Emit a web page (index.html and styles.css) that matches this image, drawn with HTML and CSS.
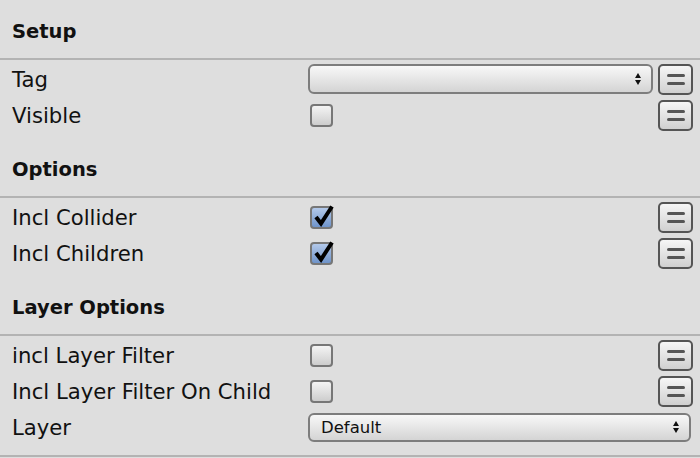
FILE: index.html
```html
<!DOCTYPE html>
<html>
<head>
<meta charset="utf-8">
<link rel="stylesheet" href="styles.css">
</head>
<body>
<div class="inspector">
  <section class="section">
    <div class="section-header">Setup</div>
    <div class="rows">
      <div class="row">
        <span class="label">Tag</span>
        <div class="popup"><span class="popup-text"></span><span class="arrows"><i class="up"></i><i class="down"></i></span></div>
        <button class="eq"><i></i><i></i></button>
      </div>
      <div class="row">
        <span class="label">Visible</span>
        <div class="ctrl"><span class="check"></span></div>
        <button class="eq"><i></i><i></i></button>
      </div>
    </div>
  </section>
  <section class="section">
    <div class="section-header">Options</div>
    <div class="rows">
      <div class="row">
        <span class="label">Incl Collider</span>
        <div class="ctrl"><span class="check on"><svg viewBox="0 0 24 24" width="24" height="24"><path d="M5 13 L10 19.5 L21 2.5" fill="none" stroke="#000" stroke-width="4" stroke-linecap="butt" stroke-linejoin="miter"/></svg></span></div>
        <button class="eq"><i></i><i></i></button>
      </div>
      <div class="row">
        <span class="label">Incl Children</span>
        <div class="ctrl"><span class="check on"><svg viewBox="0 0 24 24" width="24" height="24"><path d="M5 13 L10 19.5 L21 2.5" fill="none" stroke="#000" stroke-width="4" stroke-linecap="butt" stroke-linejoin="miter"/></svg></span></div>
        <button class="eq"><i></i><i></i></button>
      </div>
    </div>
  </section>
  <section class="section last">
    <div class="section-header">Layer Options</div>
    <div class="rows">
      <div class="row">
        <span class="label">incl Layer Filter</span>
        <div class="ctrl"><span class="check"></span></div>
        <button class="eq"><i></i><i></i></button>
      </div>
      <div class="row">
        <span class="label">Incl Layer Filter On Child</span>
        <div class="ctrl"><span class="check"></span></div>
        <button class="eq"><i></i><i></i></button>
      </div>
      <div class="row">
        <span class="label">Layer</span>
        <div class="popup wide"><span class="popup-text">Default</span><span class="arrows"><i class="up"></i><i class="down"></i></span></div>
      </div>
    </div>
  </section>
</div>
</body>
</html>
```
FILE: styles.css
```css
html, body {
  margin: 0;
  padding: 0;
  background: #dedede;
  overflow: hidden;
}
.inspector {
  width: 700px;
  height: 458px;
  font-family: "DejaVu Sans", "Liberation Sans", sans-serif;
  color: #111;
  background: #dedede;
}
.section-header {
  height: 54px;
  padding: 5px 0 0 12px;
  box-sizing: content-box;
  display: flex;
  align-items: center;
  font-weight: bold;
  font-size: 19.5px;
  border-bottom: 2px solid #b3b3b3;
  margin-top: -1px;
}
.section:first-child .section-header {
  margin-top: 0;
  height: 53px;
}
.rows {
  padding: 1px 7px 5px 12px;
}
.last .rows {
  padding-bottom: 10px;
  border-bottom: 2px solid #b3b3b3;
}
.row {
  height: 36px;
  display: grid;
  grid-template-columns: 296px 1fr auto;
  align-items: center;
  column-gap: 5px;
}
.label {
  font-size: 21.2px;
  white-space: nowrap;
  padding-top: 1px;
}
.ctrl {
  display: flex;
  align-items: center;
  margin-left: -5px;
}
.check {
  width: 19px;
  height: 19px;
  margin-left: 2px;
  border: 2px solid #777;
  border-radius: 4px;
  background: linear-gradient(#f4f4f4, #cdcdcd);
  position: relative;
}
.check.on {
  background: linear-gradient(#b3c9ea, #6f94ca);
}
.check svg {
  position: absolute;
  left: -1px;
  top: -4px;
}
.popup {
  margin-left: -5px;
  height: 26px;
  border: 2px solid #7d7d7d;
  border-radius: 6px;
  background: linear-gradient(#f8f8f8, #d4d4d4);
  display: flex;
  align-items: center;
  justify-content: space-between;
  padding: 0 10px 0 11px;
}
.popup.wide {
  grid-column: 2 / 4;
  height: 25px;
  margin-right: 2px;
}
.popup-text {
  font-size: 16.5px;
  color: #111;
}
.arrows {
  display: flex;
  flex-direction: column;
  gap: 2px;
}
.arrows i {
  display: block;
  width: 0;
  height: 0;
  border-left: 3.5px solid transparent;
  border-right: 3.5px solid transparent;
}
.arrows .up {
  border-bottom: 5px solid #111;
}
.arrows .down {
  border-top: 5px solid #111;
}
.eq {
  width: 35px;
  height: 31px;
  padding: 0;
  margin: 0;
  border: 2px solid #555;
  border-radius: 5px;
  background: linear-gradient(#f6f6f6, #d0d0d0);
  display: flex;
  flex-direction: column;
  align-items: center;
  justify-content: center;
  gap: 5px;
}
.eq i {
  display: block;
  width: 18px;
  height: 3px;
  border-radius: 2px;
  background: #555;
}
```
